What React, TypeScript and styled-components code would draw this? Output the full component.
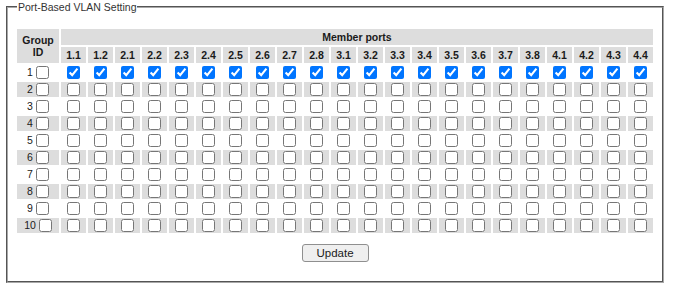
import React from "react";
import styled, {createGlobalStyle} from "styled-components";

const GlobalStyle = createGlobalStyle`
    body{
        margin:0;
        background:#ffffff;
        font-family:"Liberation Sans", Arial, sans-serif;
        color:#222222;
    }
`

const Page = styled.div`
    padding:0 0 0 6px;
`

const Fieldset = styled.fieldset`
    box-sizing:border-box;
    width:658px;
    margin:0;
    padding:13px 7px 19px 7px;
    border:2px groove #a8a8a8;
`

const Legend = styled.legend`
    margin-left:2px;
    padding:0 1px;
    font-size:10.5px;
    line-height:14px;
    color:#333333;
`

const Grid = styled.table`
    width:640px;
    table-layout:fixed;
    border-collapse:separate;
    border-spacing:2px;
`

const HeadCell = styled.th<{ $w?: number }>`
    width:${p => p.$w ? p.$w + 'px' : 'auto'};
    height:16px;
    padding:0;
    background:#dddddd;
    font-size:10.5px;
    line-height:12px;
    font-weight:bold;
    color:#1a1a1a;
    text-align:center;
`

const Row = styled.tr<{ $shade: boolean }>`
    background:${p => p.$shade ? '#dddddd' : '#ffffff'};
`

const Cell = styled.td`
    height:15px;
    padding:0;
    text-align:center;
    vertical-align:middle;
    font-size:10.5px;
    line-height:15px;
    color:#1a1a1a;
`

const Check = styled.input`
    width:13px;
    height:13px;
    margin:0;
    vertical-align:middle;
    position:relative;
    top:-1px;
`

const GroupCheck = styled(Check)`
    margin-left:3px;
`

const ButtonRow = styled.div`
    display:flex;
    justify-content:center;
    margin-top:9px;
`

const UpdateButton = styled.button`
    width:67px;
    height:18px;
    padding:0;
    background:#efefef;
    border:1px solid #8f8f8f;
    border-radius:3px;
    font-family:"Liberation Sans", Arial, sans-serif;
    font-size:11.5px;
    color:#1a1a1a;
`

const ports: string[] = [
    '1.1', '1.2',
    '2.1', '2.2', '2.3', '2.4', '2.5', '2.6', '2.7', '2.8',
    '3.1', '3.2', '3.3', '3.4', '3.5', '3.6', '3.7', '3.8',
    '4.1', '4.2', '4.3', '4.4',
]

const groups = [1, 2, 3, 4, 5, 6, 7, 8, 9, 10]

export default function App() {
    return (
        <Page>
            <GlobalStyle/>
            <Fieldset>
                <Legend>Port-Based VLAN Setting</Legend>
                <Grid>
                    <thead>
                    <tr>
                        <HeadCell $w={42} rowSpan={2}>Group<br/>ID</HeadCell>
                        <HeadCell colSpan={ports.length}>Member ports</HeadCell>
                    </tr>
                    <tr>
                        {ports.map(p => <HeadCell key={p} $w={25}>{p}</HeadCell>)}
                    </tr>
                    </thead>
                    <tbody>
                    {groups.map(g => (
                        <Row key={g} $shade={g % 2 === 0}>
                            <Cell>{g}<GroupCheck type="checkbox"/></Cell>
                            {ports.map(p => (
                                <Cell key={p}><Check type="checkbox" defaultChecked={g === 1}/></Cell>
                            ))}
                        </Row>
                    ))}
                    </tbody>
                </Grid>
                <ButtonRow>
                    <UpdateButton>Update</UpdateButton>
                </ButtonRow>
            </Fieldset>
        </Page>
    )
}
